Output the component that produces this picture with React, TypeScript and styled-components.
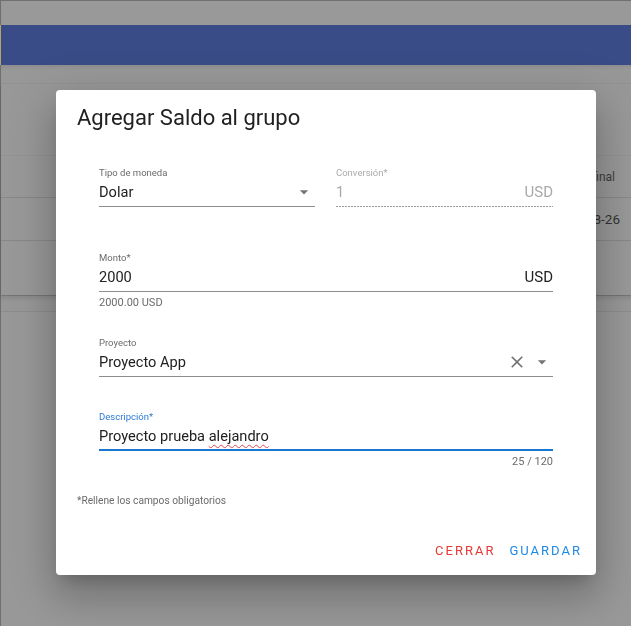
import React from "react";
import styled, { createGlobalStyle } from "styled-components";

const GlobalStyle = createGlobalStyle`
  html, body { margin: 0; padding: 0; }
  body {
    font-family: Roboto, "Noto Sans", "Liberation Sans", sans-serif;
    background: #989898;
    width: 631px;
    height: 626px;
    overflow: hidden;
  }
  * { box-sizing: border-box; }
`;

/* ---------- background page (dimmed) ---------- */
const Page = styled.div`
  height: 626px;
  display: flex;
  flex-direction: column;
  border-left: 1px solid #6f6f6f;
  border-top: 1px solid #707070;
  background: #989898;
`;

const TopStrip = styled.div`
  height: 24px;
  background: #999999;
`;

const AppBar = styled.div`
  height: 40px;
  margin-left: -1px;
  background: #3a4c87;
  border-left: 1px solid #b8a46a;
`;

const SubBar = styled.div`
  height: 19px;
  background: linear-gradient(#8e8e8e, #989898 5px, #989898);
  border-bottom: 1px solid #929292;
`;

const Card = styled.div`
  height: 211px;
  display: flex;
  flex-direction: column;
  background: #989898;
  box-shadow: 0 2px 2px rgba(0, 0, 0, 0.25);
`;

const CardSpacer = styled.div`
  height: 71px;
`;

const TableRow = styled.div<{ $pr: number; $size: number; $color: string; $top?: boolean }>`
  height: 43px;
  display: flex;
  align-items: center;
  justify-content: flex-end;
  padding-right: ${(p) => p.$pr}px;
  border-bottom: 1px solid #878787;
  border-top: ${(p) => (p.$top ? "1px solid #939393" : "none")};
  font-size: ${(p) => p.$size}px;
  color: ${(p) => p.$color};
`;

const Band = styled.div`
  height: 16px;
  margin-top: 1px;
  background: linear-gradient(#8a8a8a, #979797 6px);
  border-bottom: 1px solid #8c8c8c;
`;

/* ---------- dialog ---------- */
const Overlay = styled.div`
  position: fixed;
  inset: 0;
  padding: 90px 0 0 56px;
`;

const Dialog = styled.div`
  width: 540px;
  height: 485px;
  background: #ffffff;
  border-radius: 4px;
  display: flex;
  flex-direction: column;
  box-shadow: 0px 11px 15px -7px rgba(0, 0, 0, 0.2),
    0px 24px 38px 3px rgba(0, 0, 0, 0.14), 0px 9px 46px 8px rgba(0, 0, 0, 0.12);
`;

const Title = styled.h2`
  margin: 0;
  padding: 14px 21px 0;
  font-size: 22px;
  line-height: 28px;
  font-weight: 400;
  color: #212121;
`;

const Content = styled.div`
  padding: 0 21px;
  display: flex;
  flex-direction: column;
`;

const Form = styled.div`
  padding: 0 22px;
  display: flex;
  flex-direction: column;
`;

const Row = styled.div<{ $mt: number }>`
  margin-top: ${(p) => p.$mt}px;
  display: grid;
  grid-template-columns: 216px 1fr;
  column-gap: 21px;
`;

const Field = styled.div<{ $mt?: number }>`
  margin-top: ${(p) => p.$mt ?? 0}px;
  display: flex;
  flex-direction: column;
`;

type Tone = "normal" | "disabled" | "focused";

const labelColor: Record<Tone, string> = {
  normal: "#6b6b6b",
  disabled: "#ababab",
  focused: "#2b7bd3",
};

const Label = styled.div<{ $tone: Tone }>`
  height: 12px;
  font-size: 9.5px;
  line-height: 12px;
  color: ${(p) => labelColor[p.$tone]};
`;

const InputRow = styled.div<{ $tone: Tone }>`
  height: 28px;
  display: flex;
  align-items: center;
  padding-bottom: 1px;
  font-size: 14.6px;
  color: ${(p) => (p.$tone === "disabled" ? "#a8a8a8" : "#212121")};
  border-bottom: ${(p) =>
    p.$tone === "focused"
      ? "2px solid #1976d2"
      : p.$tone === "disabled"
      ? "1px solid transparent"
      : "1px solid #8d8d8d"};
  background-image: ${(p) =>
    p.$tone === "disabled"
      ? "linear-gradient(to right, #9c9c9c 66%, transparent 66%)"
      : "none"};
  background-size: 3px 1px;
  background-repeat: repeat-x;
  background-position: left bottom;
  background-origin: border-box;
`;

const Value = styled.span`
  flex: 1;
  white-space: nowrap;
`;

const Adorn = styled.span<{ $muted?: boolean }>`
  font-size: 15px;
  color: ${(p) => (p.$muted ? "#a8a8a8" : "#212121")};
`;

const Misspelled = styled.span`
  text-decoration: underline wavy #e0474c;
  text-decoration-thickness: 1px;
  text-underline-offset: 3px;
  text-decoration-skip-ink: none;
`;

const IconBox = styled.svg<{ $mr?: number }>`
  width: 20px;
  height: 20px;
  flex: none;
  margin-right: ${(p) => p.$mr ?? 0}px;
  fill: #757575;
`;

const Helper = styled.div<{ $mt: number; $align?: string }>`
  margin-top: ${(p) => p.$mt}px;
  height: 12px;
  font-size: 11px;
  line-height: 12px;
  color: #6b6b6b;
  text-align: ${(p) => p.$align ?? "left"};
`;

const Note = styled.div`
  margin-top: 26px;
  height: 14px;
  font-size: 10.2px;
  line-height: 14px;
  color: #6b6b6b;
`;

const Actions = styled.div`
  margin-top: 24px;
  display: flex;
  justify-content: flex-end;
  padding-right: 7px;
`;

const Button = styled.button<{ $color: string }>`
  height: 36px;
  padding: 0 7px;
  border: none;
  background: transparent;
  font-family: inherit;
  font-size: 13px;
  letter-spacing: 2px;
  font-weight: 400;
  color: ${(p) => p.$color};
  cursor: pointer;
`;

const ArrowDrop = ({ mr }: { mr?: number }) => (
  <IconBox viewBox="0 0 24 24" $mr={mr}>
    <path d="M7 10l5 5 5-5z" />
  </IconBox>
);

const CloseIcon = ({ mr }: { mr?: number }) => (
  <IconBox viewBox="0 0 24 24" $mr={mr}>
    <path d="M19 6.41L17.59 5 12 10.59 6.41 5 5 6.41 10.59 12 5 17.59 6.41 19 12 13.41 17.59 19 19 17.59 13.41 12z" />
  </IconBox>
);

export default function App() {
  return (
    <>
      <GlobalStyle />
      <Page>
        <TopStrip />
        <AppBar />
        <SubBar />
        <Card>
          <CardSpacer />
          <TableRow $pr={16} $size={12} $color="#3d3d3d" $top>
            Fecha final
          </TableRow>
          <TableRow $pr={11} $size={13.5} $color="#333333">
            2020-08-26
          </TableRow>
        </Card>
        <Band />
      </Page>

      <Overlay>
        <Dialog>
          <Title>Agregar Saldo al grupo</Title>
          <Content>
            <Form>
              <Row $mt={35}>
                <Field>
                  <Label $tone="normal">Tipo de moneda</Label>
                  <InputRow $tone="normal">
                    <Value>Dolar</Value>
                    <ArrowDrop mr={1} />
                  </InputRow>
                </Field>
                <Field>
                  <Label $tone="disabled">Conversión*</Label>
                  <InputRow $tone="disabled">
                    <Value>1</Value>
                    <Adorn $muted>USD</Adorn>
                  </InputRow>
                </Field>
              </Row>

              <Field $mt={45}>
                <Label $tone="normal">Monto*</Label>
                <InputRow $tone="normal">
                  <Value>2000</Value>
                  <Adorn>USD</Adorn>
                </InputRow>
              </Field>
              <Helper $mt={5}>2000.00 USD</Helper>

              <Field $mt={28}>
                <Label $tone="normal">Proyecto</Label>
                <InputRow $tone="normal">
                  <Value>Proyecto App</Value>
                  <CloseIcon mr={5} />
                  <ArrowDrop mr={1} />
                </InputRow>
              </Field>

              <Field $mt={34}>
                <Label $tone="focused">Descripción*</Label>
                <InputRow $tone="focused">
                  <Value>
                    Proyecto prueba <Misspelled>alejandro</Misspelled>
                  </Value>
                </InputRow>
              </Field>
              <Helper $mt={5} $align="right">
                25 / 120
              </Helper>
            </Form>
            <Note>*Rellene los campos obligatorios</Note>
          </Content>
          <Actions>
            <Button $color="#e53935">CERRAR</Button>
            <Button $color="#1e88e5">GUARDAR</Button>
          </Actions>
        </Dialog>
      </Overlay>
    </>
  );
}
